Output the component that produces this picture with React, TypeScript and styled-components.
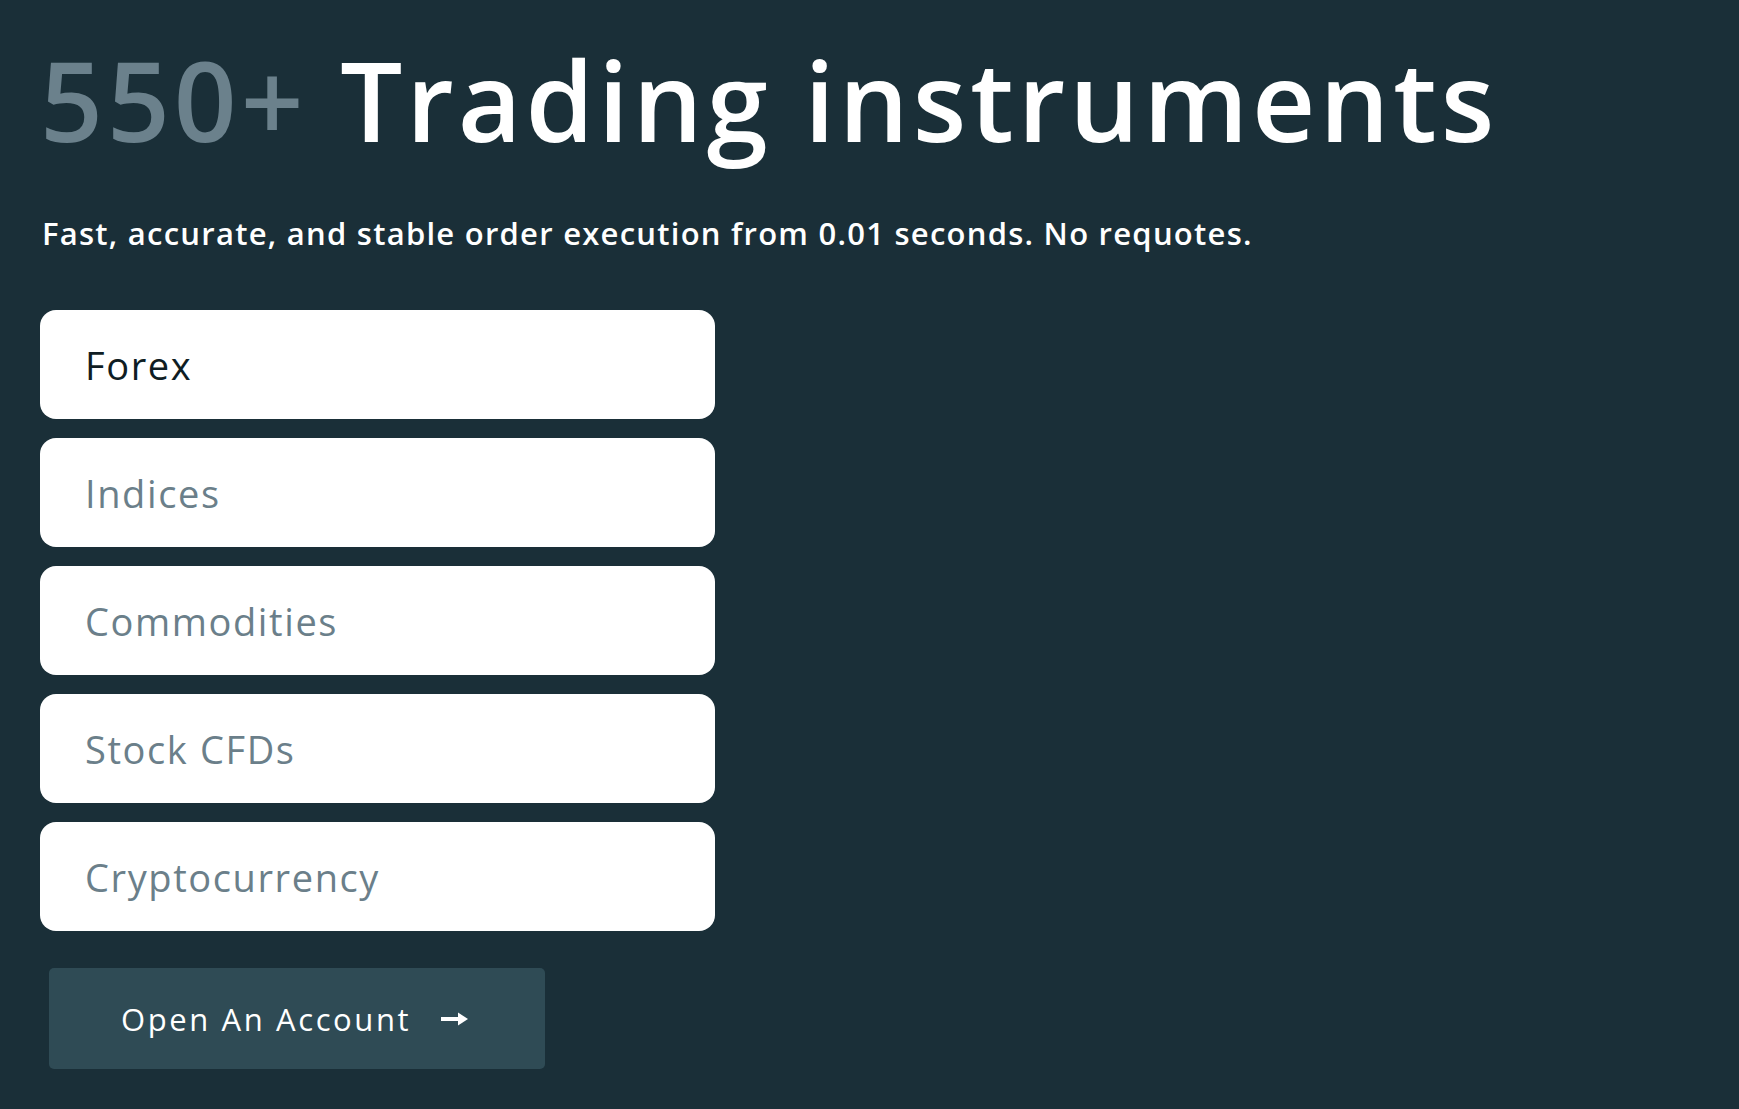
import { useState } from "react";
import styled, { createGlobalStyle } from "styled-components";

const GlobalStyle = createGlobalStyle`
  html, body {
    margin: 0;
    padding: 0;
    background: #1a2f38;
  }
  body {
    font-family: "Open Sans", "Noto Sans", sans-serif;
  }
`;

const Section = styled.section`
  min-height: 1109px;
  box-sizing: border-box;
  background: #1a2f38;
  padding: 33px 40px 40px;
`;

const Title = styled.h1`
  margin: 0;
  font-size: 110px;
  font-weight: 600;
  line-height: 1.2;
  color: #ffffff;
  letter-spacing: 4px;
  white-space: nowrap;
`;

const Count = styled.span`
  color: #6b818c;
`;

const Lead = styled.p`
  margin: 48px 0 0 2px;
  font-size: 31px;
  font-weight: 600;
  line-height: 1.3;
  letter-spacing: 1.25px;
  color: #ffffff;
  white-space: nowrap;
`;

const TabList = styled.div`
  display: flex;
  flex-direction: column;
  gap: 19px;
  width: 675px;
  margin-top: 57px;
`;

const Tab = styled.button<{ $active: boolean }>`
  display: flex;
  align-items: center;
  height: 109px;
  padding: 0 0 0 45px;
  border: 0;
  border-radius: 16px;
  background: #ffffff;
  font-family: inherit;
  font-size: 38px;
  font-weight: 500;
  letter-spacing: 1.6px;
  text-align: left;
  color: ${(p) => (p.$active ? "#0f1d23" : "#6b7f8a")};
  cursor: pointer;
`;

const CtaButton = styled.button`
  display: flex;
  align-items: center;
  gap: 30px;
  width: 496px;
  height: 101px;
  margin: 37px 0 0 9px;
  padding: 0 0 0 72px;
  border: 0;
  border-radius: 5px;
  background: #2f4b55;
  font-family: inherit;
  font-size: 31px;
  font-weight: 500;
  letter-spacing: 2.6px;
  color: #ffffff;
  cursor: pointer;
`;

const ArrowIcon = () => (
  <svg width="28" height="16" viewBox="0 0 28 16" fill="none">
    <path d="M0 8h19" stroke="#fff" strokeWidth="4" />
    <path d="M17 1.5l10 6.5-10 6.5z" fill="#fff" />
  </svg>
);

const instruments = ["Forex", "Indices", "Commodities", "Stock CFDs", "Cryptocurrency"];

const App = () => {
  const [active, setActive] = useState(0);

  return (
    <Section>
      <GlobalStyle />
      <Title>
        <Count>550+</Count> Trading instruments
      </Title>
      <Lead>Fast, accurate, and stable order execution from 0.01 seconds. No requotes.</Lead>

      <TabList>
        {instruments.map((name, i) => (
          <Tab key={name} $active={i === active} onClick={() => setActive(i)}>
            {name}
          </Tab>
        ))}
      </TabList>

      <CtaButton>
        Open An Account
        <ArrowIcon />
      </CtaButton>
    </Section>
  );
};

export default App;
